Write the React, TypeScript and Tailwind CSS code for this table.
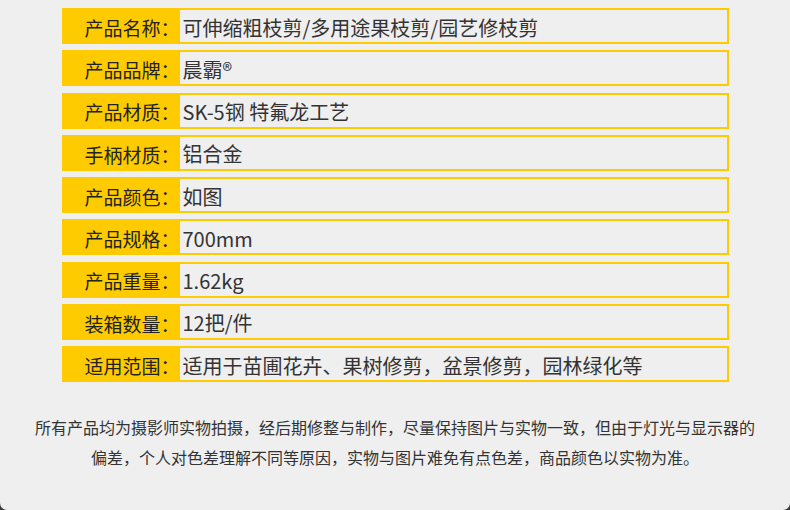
import React from "react";

const rows: [string, string][] = [
  ["产品名称", "可伸缩粗枝剪/多用途果枝剪/园艺修枝剪"],
  ["产品品牌", "晨霸®"],
  ["产品材质", "SK-5钢 特氟龙工艺"],
  ["手柄材质", "铝合金"],
  ["产品颜色", "如图"],
  ["产品规格", "700mm"],
  ["产品重量", "1.62kg"],
  ["装箱数量", "12把/件"],
  ["适用范围", "适用于苗圃花卉、果树修剪，盆景修剪，园林绿化等"],
];

export default function App() {
  return (
    <div className="w-[790px] h-[510px] bg-[#3a3a3a]">
      <div
        className="w-full h-full bg-[#efefef] rounded-b-[7px] flex flex-col items-center pt-2"
        style={{ fontFamily: "'Noto Sans CJK SC', 'Noto Sans', sans-serif" }}
      >
        <div className="w-[667px] flex flex-col gap-[6.25px]">
          {rows.map(([label, value]) => (
            <div key={label} className="flex h-[36px] border-2 border-[#fecb00]">
              <div className="w-[116px] bg-[#fecb00] flex items-center justify-end pt-[4px] text-[19px] text-[#222]">
                {label}：
              </div>
              <div className="flex-1 flex items-center pl-[3px] pt-[3px] text-[20px] text-[#333]">
                {value}
              </div>
            </div>
          ))}
        </div>
        <div className="mt-[30px] w-[780px] text-center text-[16px] leading-[30px] text-[#333]">
          <p>所有产品均为摄影师实物拍摄，经后期修整与制作，尽量保持图片与实物一致，但由于灯光与显示器的</p>
          <p>偏差，个人对色差理解不同等原因，实物与图片难免有点色差，商品颜色以实物为准。</p>
        </div>
      </div>
    </div>
  );
}
